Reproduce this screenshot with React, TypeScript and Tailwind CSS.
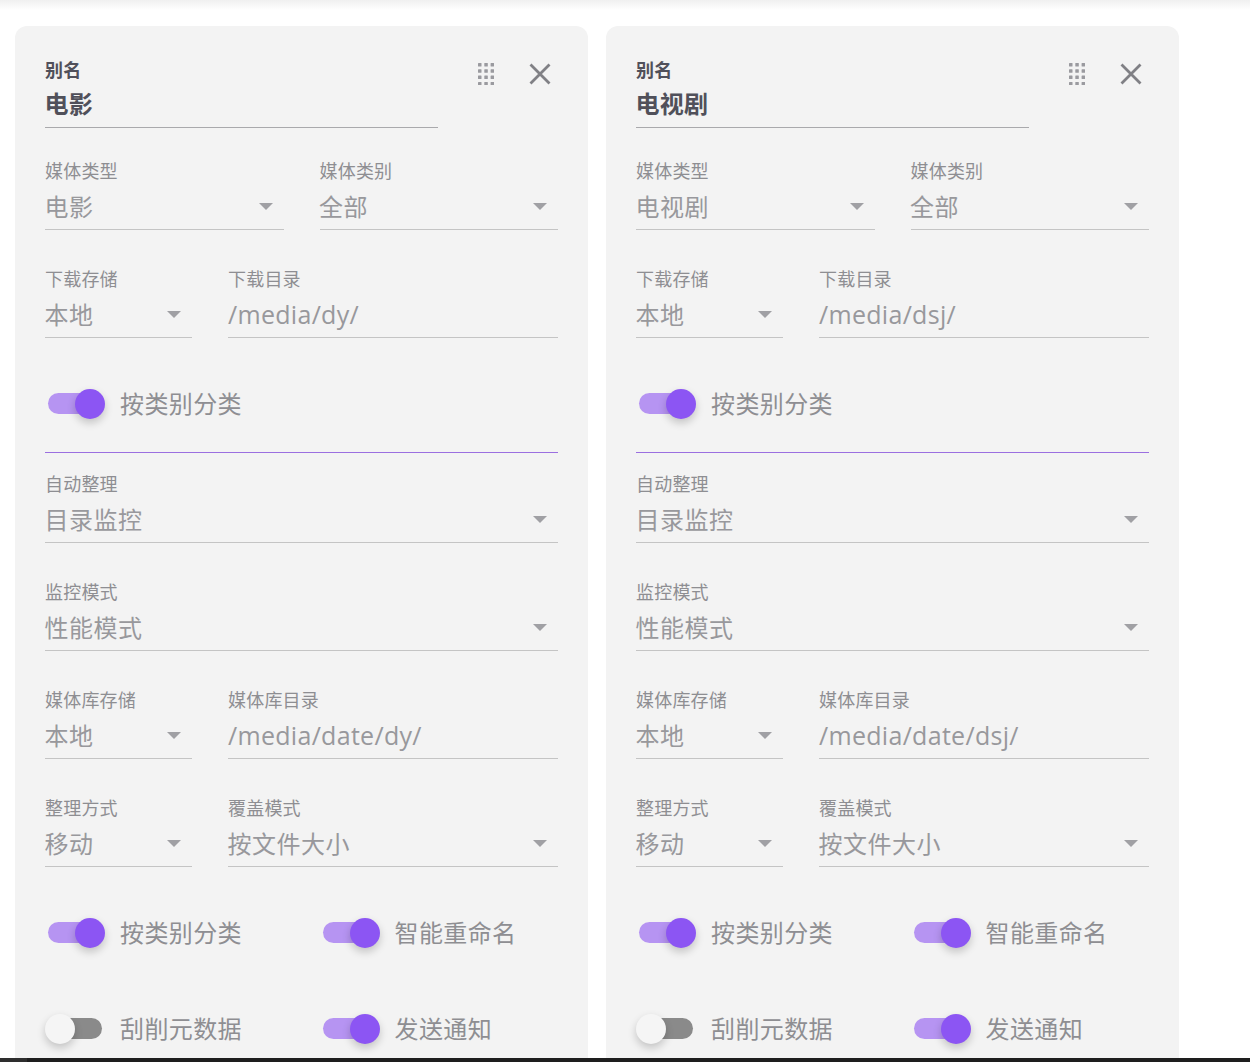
import React from "react";

const font = { fontFamily: '"Open Sans", "Noto Sans CJK SC", "Noto Sans", sans-serif' };

function Arrow() {
  return (
    <svg width="14" height="7" viewBox="0 0 14 7" className="shrink-0 mr-[11px]">
      <polygon points="0,0 14,0 7,7" fill="#a0a0a4" />
    </svg>
  );
}

function Field({ label, value, select, className = "" }: { label: string; value: string; select?: boolean; className?: string }) {
  const latin = value.startsWith("/");
  return (
    <div className={`flex flex-col min-w-0 ${className}`}>
      <div className="h-[24px] text-[18px] leading-[22px] tracking-[0.2px] text-[#8e8e92] whitespace-nowrap">{label}</div>
      <div className="h-[46px] flex items-center justify-between border-b border-[#c4c4c4] text-[24px] leading-[32px] text-[#98989c] whitespace-nowrap">
        <span className={latin ? "pb-[2px] text-[25px] tracking-[0.3px]" : "-ml-[0.5px] tracking-[0.5px]"}>{value}</span>
        {select && <Arrow />}
      </div>
    </div>
  );
}

function Toggle({ label, on = true }: { label: string; on?: boolean }) {
  return (
    <div className="flex items-center h-[30px]">
      <div className="relative w-[60px] h-[30px] shrink-0">
        <div className={`absolute left-[3px] top-[4px] w-[54px] h-[21px] rounded-full ${on ? "bg-[#b694f2]" : "bg-[#8a8a8a]"}`} />
        <div
          className={`absolute top-0 w-[30px] h-[30px] rounded-full shadow-[0_4px_8px_rgba(0,0,0,0.2)] ${on ? "left-[30px] bg-[#8c55f3]" : "left-0 bg-[#f5f5f5]"}`}
        />
      </div>
      <span className="ml-[15px] text-[24px] leading-[30px] tracking-[0.4px] text-[#8e8e92] whitespace-nowrap">{label}</span>
    </div>
  );
}

function GridIcon() {
  const dots = [];
  for (let r = 0; r < 4; r++)
    for (let c = 0; c < 3; c++)
      dots.push(<rect key={`${r}-${c}`} x={c * 6.3} y={r * 6.3} width="3.5" height="3.5" rx="0.5" fill="#9a9a9f" />);
  return (
    <svg width="16" height="22" viewBox="0 0 16 22" className="block">
      {dots}
    </svg>
  );
}

function CloseIcon() {
  return (
    <svg width="22" height="22" viewBox="0 0 22 22" className="block">
      <path d="M1.5 1.5 L20.5 20.5 M20.5 1.5 L1.5 20.5" stroke="#808085" strokeWidth="2.8" fill="none" />
    </svg>
  );
}

function Card({ title, type, dir, lib }: { title: string; type: string; dir: string; lib: string }) {
  return (
    <div className="w-[573px] shrink-0 bg-[#f3f3f3] rounded-t-[12px] pl-[30px] pr-[30px] pt-[32px] h-[1100px]">
      <div className="flex items-start">
        <div className="w-[393px] h-[70px] border-b border-[#a9a9ac] text-[#50505a] font-bold">
          <div className="h-[24px] text-[18px] leading-[24px] tracking-[0.2px]">别名</div>
          <div className="mt-[2px] -ml-[0.5px] text-[24px] leading-[40px] tracking-[0.3px]">{title}</div>
        </div>
        <div className="ml-[40px] mt-[5px]"><GridIcon /></div>
        <div className="ml-[35px] mt-[5px]"><CloseIcon /></div>
      </div>

      <div className="grid grid-cols-2 gap-x-[36px] mt-[32px]">
        <Field label="媒体类型" value={type} select />
        <Field label="媒体类别" value="全部" select />
      </div>
      <div className="flex gap-x-[36px] mt-[38px]">
        <Field label="下载存储" value="本地" select className="w-[147px]" />
        <Field label="下载目录" value={dir} className="flex-1" />
      </div>

      <div className="mt-[51px]"><Toggle label="按类别分类" /></div>
      <div className="mt-[33px] border-b border-[#9b6fe0]" />

      <Field label="自动整理" value="目录监控" select className="mt-[20px]" />
      <Field label="监控模式" value="性能模式" select className="mt-[38px]" />
      <div className="flex gap-x-[36px] mt-[38px]">
        <Field label="媒体库存储" value="本地" select className="w-[147px]" />
        <Field label="媒体库目录" value={lib} className="flex-1" />
      </div>
      <div className="flex gap-x-[36px] mt-[38px]">
        <Field label="整理方式" value="移动" select className="w-[147px]" />
        <Field label="覆盖模式" value="按文件大小" select className="flex-1" />
      </div>

      <div className="grid grid-cols-2 gap-x-[36px] gap-y-[66px] mt-[51px]">
        <Toggle label="按类别分类" />
        <Toggle label="智能重命名" />
        <Toggle label="刮削元数据" on={false} />
        <Toggle label="发送通知" />
      </div>
    </div>
  );
}

export default function App() {
  return (
    <div className="w-[1250px] h-[1062px] overflow-hidden bg-white flex flex-col" style={font}>
      <div className="h-[10px] shrink-0 bg-gradient-to-b from-[#f0f0f0] to-white" />
      <div className="flex-1 min-h-0 overflow-hidden flex gap-x-[18px] pl-[15px] pt-[16px]">
        <Card title="电影" type="电影" dir="/media/dy/" lib="/media/date/dy/" />
        <Card title="电视剧" type="电视剧" dir="/media/dsj/" lib="/media/date/dsj/" />
      </div>
      <div className="h-[4px] shrink-0 bg-[#1e1e1e]">
        <div className="w-[27px] h-full bg-[#2e2e2e]" />
      </div>
    </div>
  );
}
